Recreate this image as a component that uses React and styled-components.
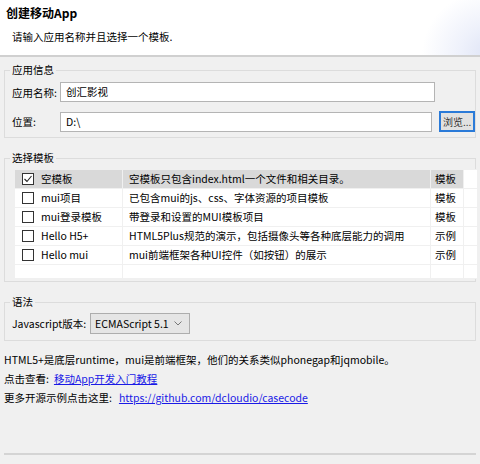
import React from "react";
import styled, { createGlobalStyle } from "styled-components";

const Global = createGlobalStyle`
  html, body { margin: 0; padding: 0; background: #f0f0f0; }
  body {
    font-family: "Noto Sans CJK SC", "Noto Sans", sans-serif;
    font-size: 10.5px;
    color: #000;
  }
`;

const Window = styled.div`
  width: 480px;
  height: 464px;
  background: #f0f0f0;
  display: flex;
  flex-direction: column;
  overflow: hidden;
`;

const Header = styled.header`
  height: 57px;
  flex: none;
  box-sizing: border-box;
  background:
    radial-gradient(ellipse 70px 64px at 492px 54px, #dde3f5 0%, #eef1fb 45%, rgba(255,255,255,0) 100%),
    #fff;
  border-bottom: 2px solid #d0d0d0;
  padding: 5px 6px 0;
  h1 {
    margin: 0;
    font-size: 12px;
    font-weight: bold;
    line-height: 16px;
  }
  p {
    margin: 8px 0 0 6px;
    line-height: 16px;
  }
`;

const Body = styled.div`
  flex: 1;
  display: flex;
  flex-direction: column;
  padding: 5px 4px 0;
  gap: 12px;
`;

const Group = styled.fieldset`
  margin: 0;
  padding: ${(p) => p.$pad};
  border: 1px solid #dcdcdc;
  min-width: 0;
  legend {
    padding: 0 2px;
    margin-left: -2px;
    line-height: 16px;
  }
`;

const FieldRow = styled.div`
  display: flex;
  align-items: center;
  margin-top: ${(p) => p.$top || 0}px;
  white-space: nowrap;
`;

const Label = styled.span`
  width: 48px;
  flex: none;
`;

const Input = styled.div`
  width: ${(p) => p.$w}px;
  height: 20px;
  box-sizing: border-box;
  background: #fff;
  border: 1px solid #b4b4b4;
  padding-left: 5px;
  line-height: 18px;
`;

const BrowseButton = styled.button`
  margin-left: 7px;
  width: 36px;
  height: 21px;
  box-sizing: border-box;
  padding: 0;
  background: #e1e1e1;
  border: 2px solid #2a7ad8;
  font: inherit;
  font-size: 10px;
  color: #333;
  white-space: nowrap;
`;

const Table = styled.table`
  border-collapse: collapse;
  table-layout: fixed;
  width: 463px;
  background: #fff;
  margin: 0 0 0 2px;
  td {
    padding: 0 0 0 6px;
    border: 1px solid #f0f0f0;
    white-space: nowrap;
    overflow: hidden;
    line-height: 16px;
  }
  td:first-child { padding-left: 7px; }
  td:nth-child(3) { padding-left: 4px; }
`;

const Row = styled.tr`
  td {
    background: ${(p) => (p.$selected ? "#d9d9d9" : "#fff")};
    height: ${(p) => (p.$empty ? 13 : 18)}px;
  }
  td:last-child { background: #fff; }
`;

const Check = styled.span`
  display: inline-block;
  vertical-align: -2px;
  width: 12px;
  height: 12px;
  box-sizing: border-box;
  border: 1px solid #333;
  background: #fff;
  margin-right: 7px;
  position: relative;
  svg { position: absolute; left: 1px; top: 1px; }
`;

const Select = styled.div`
  margin-left: 4px;
  width: 100px;
  height: 21px;
  box-sizing: border-box;
  background: #e5e5e5;
  border: 1px solid #adadad;
  display: flex;
  align-items: center;
  justify-content: space-between;
  padding: 0 7px 0 4px;
`;

const Info = styled.div`
  margin-top: -3px;
  line-height: 19px;
  p { margin: 0; }
`;

const Link = styled.a`
  color: #1a1ae6;
  text-decoration: underline;
  margin-left: ${(p) => p.$gap}px;
`;

const Footer = styled.div`
  margin-top: auto;
  height: 9px;
  border-top: 2px solid #d4d4d4;
`;

const templates = [
  { name: "空模板", desc: "空模板只包含index.html一个文件和相关目录。", kind: "模板", checked: true },
  { name: "mui项目", desc: "已包含mui的js、css、字体资源的项目模板", kind: "模板" },
  { name: "mui登录模板", desc: "带登录和设置的MUI模板项目", kind: "模板" },
  { name: "Hello H5+", desc: "HTML5Plus规范的演示，包括摄像头等各种底层能力的调用", kind: "示例" },
  { name: "Hello mui", desc: "mui前端框架各种UI控件（如按钮）的展示", kind: "示例" },
];

export default function App() {
  return (
    <Window>
      <Global />
      <Header>
        <h1>创建移动App</h1>
        <p>请输入应用名称并且选择一个模板.</p>
      </Header>
      <Body>
        <Group $pad="4px 0 5px 7px">
          <legend>应用信息</legend>
          <FieldRow>
            <Label>应用名称:</Label>
            <Input $w={375}>创汇影视</Input>
          </FieldRow>
          <FieldRow $top={9}>
            <Label>位置:</Label>
            <Input $w={375}>D:\</Input>
            <BrowseButton>浏览...</BrowseButton>
          </FieldRow>
        </Group>
        <Group $pad="3px 0 2px 7px">
          <legend>选择模板</legend>
          <Table>
            <colgroup>
              <col style={{ width: 108 }} />
              <col style={{ width: 308 }} />
              <col style={{ width: 33 }} />
              <col style={{ width: 14 }} />
            </colgroup>
            <tbody>
              {templates.map((t) => (
                <Row key={t.name} $selected={t.checked}>
                  <td>
                    <Check>
                      {t.checked && (
                        <svg width="8" height="8" viewBox="0 0 8 8">
                          <path d="M0.5 4 L3 6.5 L7.5 1" fill="none" stroke="#222" strokeWidth="1.1" />
                        </svg>
                      )}
                    </Check>
                    {t.name}
                  </td>
                  <td>{t.desc}</td>
                  <td>{t.kind}</td>
                  <td />
                </Row>
              ))}
              <Row $empty>
                <td />
                <td />
                <td />
                <td />
              </Row>
            </tbody>
          </Table>
        </Group>
        <Group $pad="3px 0 6px 7px">
          <legend>语法</legend>
          <FieldRow>
            <span>Javascript版本:</span>
            <Select>
              <span>ECMAScript 5.1</span>
              <svg width="8" height="5" viewBox="0 0 8 5">
                <path d="M0.5 0.5 L4 4 L7.5 0.5" fill="none" stroke="#777" strokeWidth="1" />
              </svg>
            </Select>
          </FieldRow>
        </Group>
        <Info>
          <p>HTML5+是底层runtime，mui是前端框架，他们的关系类似phonegap和jqmobile。</p>
          <p>
            点击查看:<Link href="#" $gap={5}>移动App开发入门教程</Link>
          </p>
          <p>
            更多开源示例点击这里:<Link href="#" $gap={7}>https://github.com/dcloudio/casecode</Link>
          </p>
        </Info>
        <Footer />
      </Body>
    </Window>
  );
}
